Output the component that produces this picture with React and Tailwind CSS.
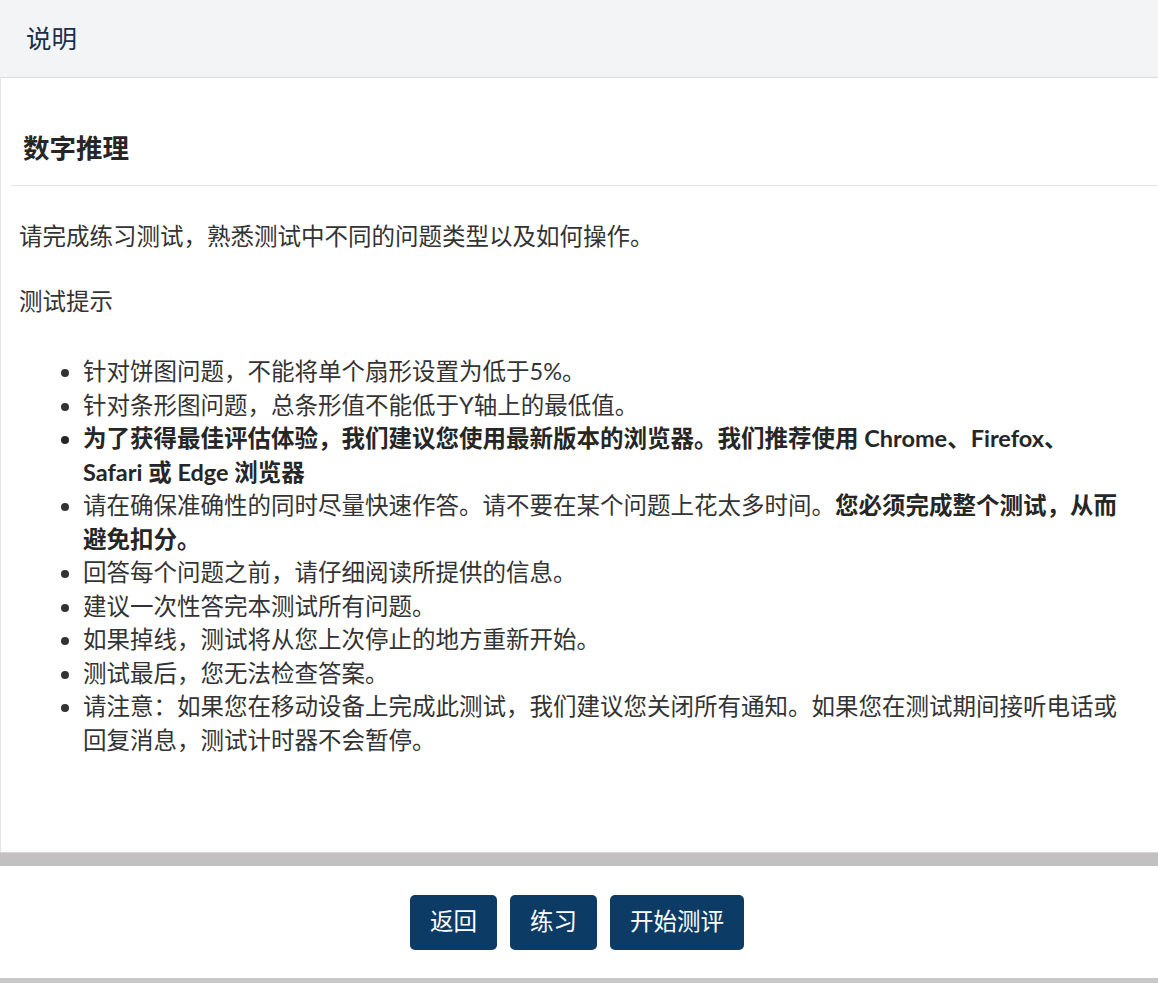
export default function App() {
  const font = { fontFamily: "Lato, 'Noto Sans CJK SC', sans-serif" };
  return (
    <div className="h-[983px] w-full flex flex-col bg-white overflow-hidden" style={font}>
      <header className="h-[78px] shrink-0 bg-[#f3f4f5] border-b border-[#dadcde] flex items-center pl-[26px]">
        <span className="text-[25.5px] text-[#1b2f47] leading-none">说明</span>
      </header>
      <main className="flex-1 bg-white text-[#333] border-l border-[#e4e4e4]">
        <div className="ml-[10px] pt-[53px] pb-[20px] border-b border-[#e6e6e6] pl-[12px]">
          <h1 className="text-[26.5px] font-bold leading-[34px] text-[#262626]">数字推理</h1>
        </div>
        <div className="pl-[18px] pr-[35px] text-[23.5px] leading-[33.5px]">
          <p className="pt-[34px]">请完成练习测试，熟悉测试中不同的问题类型以及如何操作。</p>
          <p className="mt-[31px]">测试提示</p>
          <ul className="mt-[37px] pl-[64px] list-disc">
            <li>针对饼图问题，不能将单个扇形设置为低于5%。</li>
            <li>针对条形图问题，总条形值不能低于Y轴上的最低值。</li>
            <li className="font-bold text-[#262626]">为了获得最佳评估体验，我们建议您使用最新版本的浏览器。我们推荐使用 Chrome、Firefox、Safari 或 Edge 浏览器</li>
            <li>请在确保准确性的同时尽量快速作答。请不要在某个问题上花太多时间。<b className="font-bold text-[#262626]">您必须完成整个测试，从而避免扣分。</b></li>
            <li>回答每个问题之前，请仔细阅读所提供的信息。</li>
            <li>建议一次性答完本测试所有问题。</li>
            <li>如果掉线，测试将从您上次停止的地方重新开始。</li>
            <li>测试最后，您无法检查答案。</li>
            <li>请注意：如果您在移动设备上完成此测试，我们建议您关闭所有通知。如果您在测试期间接听电话或回复消息，测试计时器不会暂停。</li>
          </ul>
        </div>
      </main>
      <div className="h-[14px] shrink-0 bg-[#c3c0c1] border-t border-[#d6d4d5]"></div>
      <footer className="h-[112px] shrink-0 bg-white flex items-center justify-center gap-[13px] pr-[4px]">
        <button className="h-[55px] px-[20px] rounded-[5px] bg-[#0c3c66] text-white text-[23.5px] leading-none">返回</button>
        <button className="h-[55px] px-[20px] rounded-[5px] bg-[#0c3c66] text-white text-[23.5px] leading-none">练习</button>
        <button className="h-[55px] px-[20px] rounded-[5px] bg-[#0c3c66] text-white text-[23.5px] leading-none">开始测评</button>
      </footer>
      <div className="h-[5px] shrink-0 bg-[#c8c8c8]"></div>
    </div>
  );
}
